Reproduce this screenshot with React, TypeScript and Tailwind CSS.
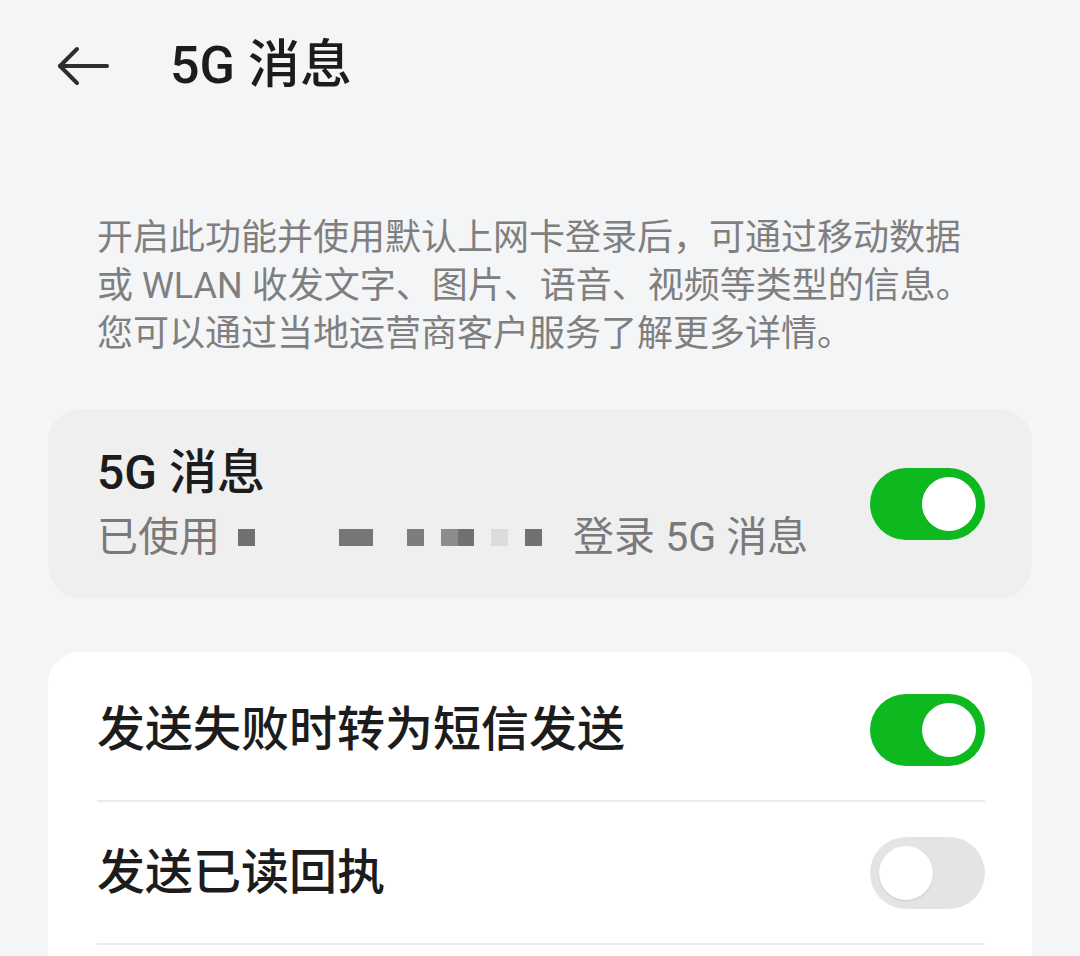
import React from 'react';

const font = { fontFamily: 'Roboto, "Noto Sans CJK SC", "Noto Sans", sans-serif' };

function Toggle({ on }: { on: boolean }) {
  return (
    <div
      className={`flex items-center w-[115px] h-[72px] rounded-full px-[9px] shrink-0 ${
        on ? 'bg-[#0db91f] justify-end' : 'bg-[#e4e4e4] justify-start'
      }`}
    >
      <div className={`w-[54px] h-[54px] rounded-full bg-white ${on ? '' : 'shadow-[0_1px_2px_rgba(0,0,0,0.12)]'}`} />
    </div>
  );
}

const Block = ({ cls }: { cls: string }) => <span className={`inline-block h-[17px] ${cls}`} />;

export default function App() {
  return (
    <div className="w-[1080px] h-[956px] overflow-hidden bg-[#f4f5f7]" style={font}>
      {/* header */}
      <div className="flex items-center h-[132px] pl-[57px]">
        <svg width="52" height="40" viewBox="0 0 52 40" fill="none" stroke="#2e2e2e" strokeWidth="4" strokeLinecap="round" strokeLinejoin="round">
          <path d="M50 20H3" />
          <path d="M20 3L3 20l17 17" />
        </svg>
        <div className="ml-[61px] text-[52px] font-medium text-[#1c1c1c] leading-none">5G 消息</div>
      </div>

      {/* description */}
      <div className="mt-[82px] px-[97px] text-[36px] leading-[48px] text-[#7f7f7f]">
        <div>开启此功能并使用默认上网卡登录后，可通过移动数据</div>
        <div>或 WLAN 收发文字、图片、语音、视频等类型的信息。</div>
        <div>您可以通过当地运营商客户服务了解更多详情。</div>
      </div>

      {/* 5G card */}
      <div className="mt-[51px] mx-[48px] h-[189px] rounded-[32px] bg-[#efefef] flex items-center pl-[49px] pr-[47px]">
        <div className="flex-1">
          <div className="text-[48px] leading-[60px] font-medium text-[#1c1c1c]">5G 消息</div>
          <div className="flex items-center mt-[7px] text-[41px] leading-[54px] text-[#7a7a7a]">
            <span>已使用</span>
            <Block cls="ml-[18px] w-[17px] bg-[#707070]" />
            <Block cls="ml-[84px] w-[34px] bg-[#767676]" />
            <Block cls="ml-[34px] w-[17px] bg-[#7d7d7d]" />
            <Block cls="ml-[17px] w-[17px] bg-[#8c8c8c]" />
            <Block cls="w-[16px] bg-[#717171]" />
            <Block cls="ml-[17px] w-[17px] bg-[#dcdcdc]" />
            <Block cls="ml-[17px] w-[17px] bg-[#717171]" />
            <span className="ml-[31px]">登录 5G 消息</span>
          </div>
        </div>
        <Toggle on />
      </div>

      {/* settings card */}
      <div className="mt-[54px] mx-[48px] rounded-t-[32px] bg-white pt-[7px] pl-[49px] pr-[47px]">
        <div className="flex items-center h-[143px] border-b-2 border-[#ececec]">
          <div className="flex-1 text-[48px] font-medium text-[#1c1c1c]">发送失败时转为短信发送</div>
          <Toggle on />
        </div>
        <div className="flex items-center h-[143px] border-b-2 border-[#ececec]">
          <div className="flex-1 text-[48px] font-medium text-[#1c1c1c]">发送已读回执</div>
          <Toggle on={false} />
        </div>
        <div className="h-[80px]" />
      </div>
    </div>
  );
}
